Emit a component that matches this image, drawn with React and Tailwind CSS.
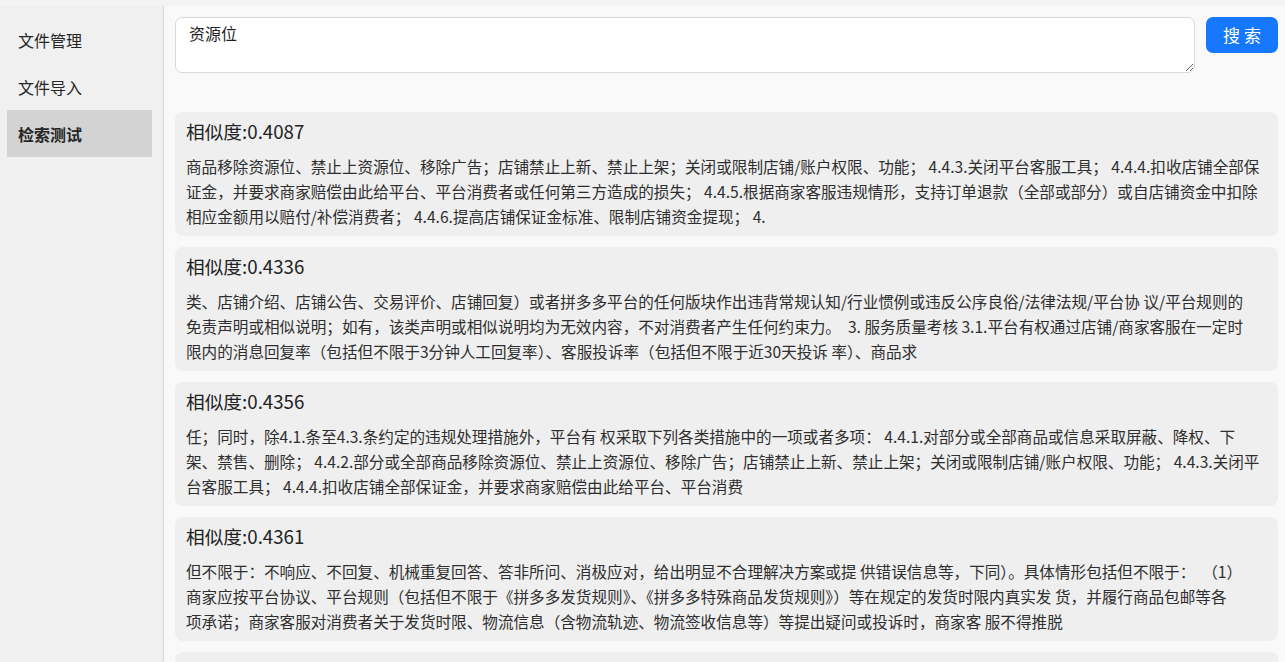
import React, { useState } from "react";

const results = [
  {
    score: "0.4087",
    lines: [
      "商品移除资源位、禁止上资源位、移除广告；店铺禁止上新、禁止上架；关闭或限制店铺/账户权限、功能； 4.4.3.关闭平台客服工具； 4.4.4.扣收店铺全部保",
      "证金，并要求商家赔偿由此给平台、平台消费者或任何第三方造成的损失； 4.4.5.根据商家客服违规情形，支持订单退款（全部或部分）或自店铺资金中扣除",
      "相应金额用以赔付/补偿消费者； 4.4.6.提高店铺保证金标准、限制店铺资金提现； 4.",
    ],
  },
  {
    score: "0.4336",
    lines: [
      "类、店铺介绍、店铺公告、交易评价、店铺回复）或者拼多多平台的任何版块作出违背常规认知/行业惯例或违反公序良俗/法律法规/平台协 议/平台规则的",
      "免责声明或相似说明；如有，该类声明或相似说明均为无效内容，不对消费者产生任何约束力。  3. 服务质量考核 3.1.平台有权通过店铺/商家客服在一定时",
      "限内的消息回复率（包括但不限于3分钟人工回复率）、客服投诉率（包括但不限于近30天投诉 率）、商品求",
    ],
  },
  {
    score: "0.4356",
    lines: [
      "任；同时，除4.1.条至4.3.条约定的违规处理措施外，平台有 权采取下列各类措施中的一项或者多项： 4.4.1.对部分或全部商品或信息采取屏蔽、降权、下",
      "架、禁售、删除； 4.4.2.部分或全部商品移除资源位、禁止上资源位、移除广告；店铺禁止上新、禁止上架；关闭或限制店铺/账户权限、功能； 4.4.3.关闭平",
      "台客服工具； 4.4.4.扣收店铺全部保证金，并要求商家赔偿由此给平台、平台消费",
    ],
  },
  {
    score: "0.4361",
    lines: [
      "但不限于：不响应、不回复、机械重复回答、答非所问、消极应对，给出明显不合理解决方案或提 供错误信息等，下同）。具体情形包括但不限于：  （1）",
      "商家应按平台协议、平台规则（包括但不限于《拼多多发货规则》、《拼多多特殊商品发货规则》）等在规定的发货时限内真实发 货，并履行商品包邮等各",
      "项承诺；商家客服对消费者关于发货时限、物流信息（含物流轨迹、物流签收信息等）等提出疑问或投诉时，商家客 服不得推脱",
    ],
  },
  {
    score: "0.4372",
    lines: [
      "商家应当在承诺的时限内发货，如未能按时发货，平台有权根据相关规则对商家进行处理。",
    ],
  },
];

const menu = ["文件管理", "文件导入", "检索测试"];

export default function App() {
  const [active, setActive] = useState("检索测试");
  const [query, setQuery] = useState("资源位");

  return (
    <div
      className="h-screen flex flex-col pt-[6px] bg-[#f3f3f3] text-[#262626] overflow-hidden"
      style={{ fontFamily: '"Noto Sans CJK SC", "Noto Sans", sans-serif' }}
    >
      <div className="flex flex-1 min-h-0">
        {/* sidebar */}
        <div className="w-[164px] shrink-0 bg-[#f0f0f0] border-r border-[#d6d6d6] pt-[10px] pl-[7px] pr-[11px]">
          {menu.map((m) => (
            <div
              key={m}
              onClick={() => setActive(m)}
              className={
                active === m
                  ? "h-[47px] flex items-center pl-[11px] text-[16px] font-bold bg-[#d3d3d3] cursor-pointer"
                  : "h-[47px] flex items-center pl-[11px] text-[16px] cursor-pointer"
              }
            >
              {m}
            </div>
          ))}
        </div>

        {/* main */}
        <div className="flex-1 min-w-0 bg-[#f9f9f9] pt-[11px] pl-[11px] pr-[7px] overflow-hidden">
          <div className="flex items-start gap-[11px]">
            <textarea
              value={query}
              onChange={(e) => setQuery(e.target.value)}
              className="flex-1 h-[56px] bg-white border border-[#d9d9d9] rounded-[7px] px-[13px] py-[4px] text-[16px] leading-[22px] text-[#1f1f1f] outline-none"
            />
            <button className="w-[72px] h-[36px] rounded-[7px] bg-[#1677ff] text-white text-[17px]">
              搜 索
            </button>
          </div>

          <div className="mt-[39px] flex flex-col gap-[11px]">
            {results.map((r) => (
              <div key={r.score} className="bg-[#efefef] rounded-[8px] pt-[7px] pb-[7px] px-[11px]">
                <h3 className="text-[18.7px] leading-[24px] text-[#222]">相似度:{r.score}</h3>
                <div className="mt-[11px] text-[15.6px] leading-[25px] text-[#2e2e2e]">
                  {r.lines.map((l, i) => (
                    <div key={i} className="whitespace-pre">
                      {l}
                    </div>
                  ))}
                </div>
              </div>
            ))}
          </div>
        </div>
      </div>
    </div>
  );
}
